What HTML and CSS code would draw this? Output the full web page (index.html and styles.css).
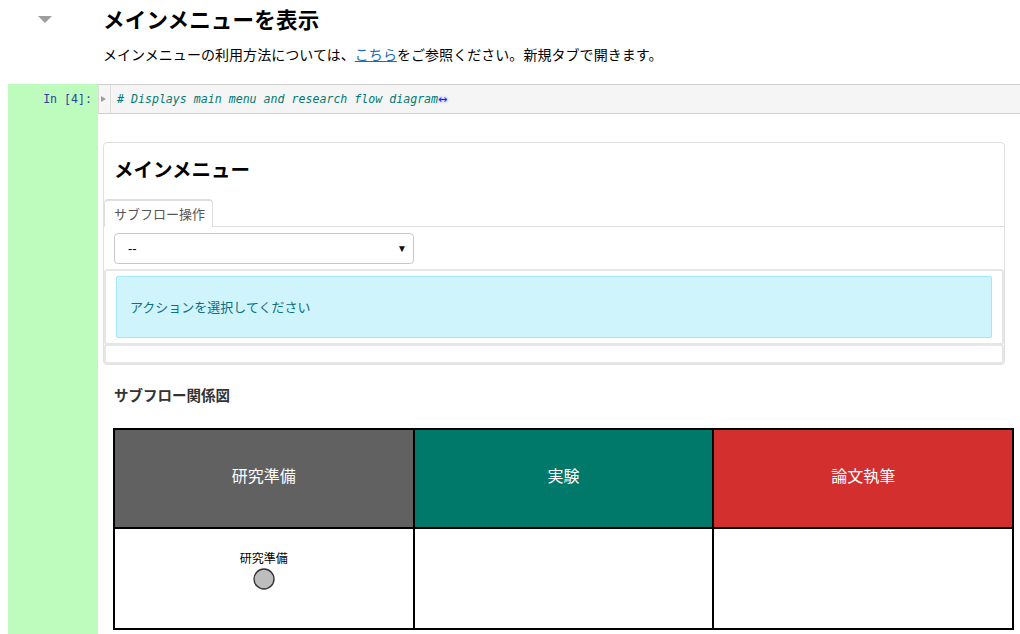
FILE: index.html
```html
<!DOCTYPE html>
<html lang="ja">
<head>
<meta charset="utf-8">
<link rel="stylesheet" href="styles.css">
</head>
<body>
<div class="md-cell">
  <div class="md-gutter"><span class="collapse-tri"></span></div>
  <div class="md-body">
    <h1 class="md-title">メインメニューを表示</h1>
    <p class="md-text">メインメニューの利用方法については、<a class="md-link" href="#">こちら</a>をご参照ください。新規タブで開きます。</p>
  </div>
</div>

<div class="code-cell">
  <div class="prompt">In [4]:</div>
  <div class="cell-main">
    <div class="input-area">
      <div class="fold-gutter"><span class="fold-tri"></span></div>
      <div class="code-line"><span class="cm-comment"># Displays main menu and research flow diagram</span><span class="fold-mark">↔</span></div>
    </div>
    <div class="output-area">
      <div class="menu-panel">
        <h2 class="menu-title">メインメニュー</h2>
        <div class="tab-bar"><div class="tab">サブフロー操作</div></div>
        <div class="tab-content">
          <div class="select-box"><span class="select-value">--</span><span class="select-caret">▼</span></div>
        </div>
        <div class="inner-box">
          <div class="alert-info">アクションを選択してください</div>
        </div>
        <div class="inner-box empty"></div>
      </div>
      <h3 class="diagram-title">サブフロー関係図</h3>
      <table class="flow-table">
        <tr class="flow-head">
          <th class="col-prep">研究準備</th>
          <th class="col-exp">実験</th>
          <th class="col-paper">論文執筆</th>
        </tr>
        <tr class="flow-body">
          <td>
            <div class="node">
              <span class="node-label">研究準備</span>
              <svg class="node-circle" width="24" height="24" viewBox="0 0 24 24"><circle cx="12" cy="12" r="10" fill="#bdbdbd" stroke="#333" stroke-width="1.4"/></svg>
            </div>
          </td>
          <td></td>
          <td></td>
        </tr>
      </table>
    </div>
  </div>
</div>
</body>
</html>
```

FILE: styles.css
```css
html, body {
  margin: 0;
  padding: 0;
  background: #fff;
  font-family: "Noto Sans CJK JP", "Liberation Sans", sans-serif;
  color: #000;
  overflow: hidden;
}

.md-cell {
  display: flex;
  height: 84px;
}
.md-gutter {
  width: 103px;
  position: relative;
}
.collapse-tri {
  position: absolute;
  left: 38px;
  top: 16px;
  width: 0;
  height: 0;
  border-left: 7px solid transparent;
  border-right: 7px solid transparent;
  border-top: 7px solid #9e9e9e;
}
.md-body {
  flex: 1;
}
.md-title {
  margin: 0;
  padding-top: 4px;
  font-size: 21.5px;
  line-height: 30px;
  font-weight: 700;
  letter-spacing: 0.2px;
}
.md-text {
  margin: 0;
  padding-top: 10px;
  font-size: 14px;
  line-height: 20px;
  letter-spacing: 0.05px;
}
.md-link {
  color: #1e6bb8;
  text-decoration: underline;
}

.code-cell {
  display: flex;
  margin-left: 8px;
  height: 550px;
}
.prompt {
  width: 90px;
  flex: none;
  background: #bdfcbd;
  box-sizing: border-box;
  padding-right: 6px;
  text-align: right;
  font-family: "DejaVu Sans Mono", "Liberation Mono", monospace;
  font-size: 11.6px;
  line-height: 30px;
  color: #303f9f;
}
.cell-main {
  flex: 1;
  min-width: 0;
}
.input-area {
  display: flex;
  height: 30px;
  box-sizing: border-box;
  border-top: 1px solid #cfcfcf;
  border-bottom: 1px solid #cfcfcf;
  background: #f5f5f5;
}
.fold-gutter {
  width: 13px;
  flex: none;
  border-left: 1px solid #dcdcdc;
  border-right: 1px solid #dcdcdc;
  box-sizing: border-box;
  position: relative;
}
.fold-tri {
  position: absolute;
  left: 2px;
  top: 11px;
  width: 0;
  height: 0;
  border-top: 3.5px solid transparent;
  border-bottom: 3.5px solid transparent;
  border-left: 5px solid #9e9e9e;
}
.code-line {
  padding-left: 6px;
  font-family: "DejaVu Sans Mono", "Liberation Mono", monospace;
  font-size: 11.6px;
  line-height: 28px;
  white-space: pre;
}
.cm-comment {
  color: #007a73;
  font-style: italic;
}
.fold-mark {
  color: #2020ff;
  text-shadow: 0 0 3px #8080ff;
  font-family: "DejaVu Sans", sans-serif;
  font-size: 11px;
}

.output-area {
  padding-top: 28px;
}
.menu-panel {
  margin-left: 5px;
  width: 902px;
  box-sizing: border-box;
  border: 1px solid #e0e0e0;
  border-radius: 4px;
}
.menu-title {
  margin: 0;
  padding: 13px 0 0 10px;
  font-size: 19.5px;
  line-height: 26px;
  font-weight: 700;
  height: 56px;
  box-sizing: border-box;
}
.tab-bar {
  display: flex;
  border-bottom: 1px solid #dedede;
}
.tab {
  border: 1px solid #dedede;
  border-bottom: none;
  border-top-width: 2px;
  border-radius: 4px 4px 0 0;
  width: 109px;
  height: 28px;
  box-sizing: border-box;
  padding-left: 9px;
  font-size: 13px;
  line-height: 26px;
  color: #555;
  margin-bottom: -1px;
  background: #fff;
}
.tab-content {
  padding: 6px 0 5px 10px;
}
.select-box {
  width: 300px;
  height: 31px;
  box-sizing: border-box;
  border: 1px solid #c8c8c8;
  border-radius: 4px;
  display: flex;
  align-items: center;
  justify-content: space-between;
  padding: 0 6px 0 13px;
  font-family: "Liberation Sans", sans-serif;
  font-size: 13px;
}
.select-caret {
  font-size: 10px;
  color: #111;
}
.inner-box {
  border: 2px solid #e6e6e6;
  border-radius: 3px;
  padding: 5px 10px 5px 10px;
  box-sizing: border-box;
}
.inner-box.empty {
  height: 20px;
  padding: 0;
  margin-top: -1px;
}
.alert-info {
  height: 62px;
  box-sizing: border-box;
  background: #cff4fc;
  border: 1px solid #9eeaf9;
  border-radius: 2px;
  padding-left: 13px;
  font-size: 13px;
  line-height: 60px;
  color: #0a6e85;
}

.diagram-title {
  margin: 0;
  padding: 19px 0 0 16px;
  height: 63px;
  box-sizing: border-box;
  font-size: 14.5px;
  line-height: 22px;
  font-weight: 700;
  color: #333;
}
.flow-table {
  margin-left: 15px;
  border-collapse: collapse;
  width: 901px;
  table-layout: fixed;
}
.flow-table th,
.flow-table td {
  border: 2px solid #000;
  padding: 0;
  text-align: center;
}
.flow-head th {
  height: 99px;
  color: #fff;
  font-weight: 400;
  font-size: 16px;
  line-height: 20px;
  padding-bottom: 7px;
  box-sizing: border-box;
}
.col-prep { background: #616161; }
.col-exp { background: #00796b; }
.col-paper { background: #d32f2f; }
.flow-body td {
  height: 99px;
  vertical-align: top;
}
.node {
  display: flex;
  flex-direction: column;
  align-items: center;
  padding-top: 21px;
}
.node-label {
  font-size: 12px;
  line-height: 16px;
}
.node-circle {
  display: block;
  margin-top: 1px;
}
```
